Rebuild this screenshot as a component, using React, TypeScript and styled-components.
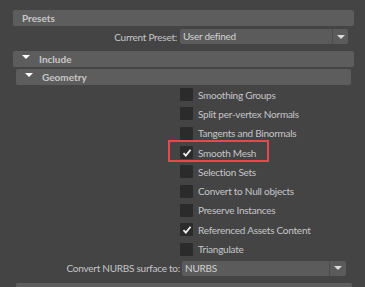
import React from 'react';
import styled, {createGlobalStyle} from 'styled-components';

const GlobalStyle = createGlobalStyle`
	html, body {
		margin     : 0;
		padding    : 0;
		background : #444444;
	}
	body {
		font-family    : Lato, "Open Sans", sans-serif;
		font-size      : 10px;
		letter-spacing : -0.25px;
		color          : #c6c6c8;
	}
`;

const Page = styled.div`
	display        : flex;
	flex-direction : column;
	width          : 365px;
	height         : 287px;
	padding        : 10px 11px 0 13px;
	box-sizing     : border-box;
	overflow       : hidden;
`;

const SectionBar = styled.div<{ $inset?: number; $top?: number }>`
	display        : flex;
	align-items    : center;
	flex           : none;
	height         : 16px;
	margin         : ${p => p.$top ?? 0}px ${p => p.$inset ?? 0}px 0 ${p => p.$inset ?? 0}px;
	padding-left   : 9px;
	background     : #5d5d5d;
	border-radius  : 2px;
	font-weight    : 700;
	letter-spacing : 0;
	color          : #c8c8c8;
	line-height    : 16px;
`;

const Triangle = styled.span`
	width        : 0;
	height       : 0;
	border-left  : 4px solid transparent;
	border-right : 4px solid transparent;
	border-top   : 4px solid #ffffff;
	margin-right : 9px;
	margin-top   : -4px;
`;

const FieldRow = styled.div<{ $label: number; $gap: number; $top: number; $right: number }>`
	display               : grid;
	grid-template-columns : ${p => p.$label}px 1fr;
	column-gap            : ${p => p.$gap}px;
	align-items           : center;
	height                : 15px;
	margin                : ${p => p.$top}px ${p => p.$right}px 0 0;
	flex                  : none;
`;

const FieldLabel = styled.span`
	text-align  : right;
	white-space : nowrap;
`;

const Combo = styled.div<{ $button: number }>`
	display               : grid;
	grid-template-columns : 1fr ${p => p.$button}px;
	height                : 15px;
	background            : #5b5b5b;
	border-radius         : 2px;
	overflow              : hidden;
`;

const ComboValue = styled.span`
	padding-left : 3px;
	line-height  : 15px;
	color        : #d2d2d2;
	white-space  : nowrap;
`;

const ComboButton = styled.span`
	display         : flex;
	align-items     : center;
	justify-content : center;
	border-left     : 1px solid #4c4c4c;
	&::after {
		content      : '';
		border-left  : 4px solid transparent;
		border-right : 4px solid transparent;
		border-top   : 4px solid #dcdcdc;
	}
`;

const CheckList = styled.div`
	display        : flex;
	flex-direction : column;
	margin         : 0 0 0 167px;
	flex           : none;
`;

const CheckRow = styled.div`
	position    : relative;
	display     : flex;
	align-items : center;
	gap         : 5px;
	height      : 19.3px;
	white-space : nowrap;
`;

const Box = styled.span`
	display         : flex;
	align-items     : center;
	justify-content : center;
	width           : 13px;
	height          : 13px;
	background      : #2b2b2b;
	border-radius   : 1px;
	flex            : none;
`;

const Highlight = styled.span`
	position       : absolute;
	left           : -12px;
	top            : -3px;
	width          : 101px;
	height         : 22px;
	border         : 2px solid #e8474b;
	box-sizing     : border-box;
	pointer-events : none;
`;

const BottomBar = styled.div`
	flex          : none;
	height        : 8px;
	margin        : 7px 2px 0 3px;
	background    : #5d5d5d;
	border-radius : 2px;
`;

const Check = () => (
	<svg width="10" height="10" viewBox="0 0 10 10">
		<path d="M1.5 5.2 L3.8 7.6 L8.6 1.8" fill="none" stroke="#f2f2f2" strokeWidth="1.8"/>
	</svg>
);

const options: { label: string; checked?: boolean; highlight?: boolean }[] = [
	{label: 'Smoothing Groups'},
	{label: 'Split per-vertex Normals'},
	{label: 'Tangents and Binormals'},
	{label: 'Smooth Mesh', checked: true, highlight: true},
	{label: 'Selection Sets'},
	{label: 'Convert to Null objects'},
	{label: 'Preserve Instances'},
	{label: 'Referenced Assets Content', checked: true},
	{label: 'Triangulate'}
];

export default function App() {
	return <>
		<GlobalStyle/>
		<Page>
			<SectionBar>Presets</SectionBar>
			<FieldRow $label={164} $gap={3} $top={3} $right={6}>
				<FieldLabel>Current Preset:</FieldLabel>
				<Combo $button={16}>
					<ComboValue>User defined</ComboValue>
					<ComboButton/>
				</Combo>
			</FieldRow>
			<SectionBar $top={7}><Triangle/>Include</SectionBar>
			<SectionBar $top={2} $inset={3}><Triangle/>Geometry</SectionBar>
			<CheckList>
				{options.map(o => <CheckRow key={o.label}>
					<Box>{o.checked ? <Check/> : null}</Box>
					<span>{o.label}</span>
					{o.highlight ? <Highlight/> : null}
				</CheckRow>)}
			</CheckList>
			<FieldRow $label={167} $gap={2} $top={2} $right={8}>
				<FieldLabel>Convert NURBS surface to:</FieldLabel>
				<Combo $button={17}>
					<ComboValue>NURBS</ComboValue>
					<ComboButton/>
				</Combo>
			</FieldRow>
			<BottomBar/>
		</Page>
	</>;
}
